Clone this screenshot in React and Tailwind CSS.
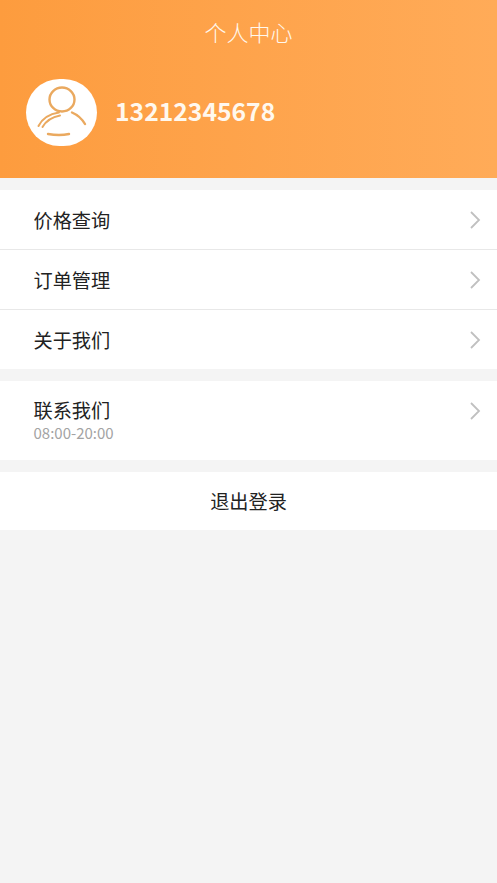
const cjk = { fontFamily: '"Noto Sans CJK SC", "Noto Sans", sans-serif' };

function Chevron() {
  return (
    <svg width="12" height="20" viewBox="0 0 12 20" fill="none" className="shrink-0">
      <path d="M2 2 L10 10 L2 18" stroke="#c0c0c0" strokeWidth="1.8" />
    </svg>
  );
}

function Avatar() {
  return (
    <div className="w-[71px] h-[67px] rounded-full bg-white flex items-center justify-center shrink-0">
      <svg width="71" height="67" viewBox="0 0 71 67" fill="none" stroke="#eaa95f" strokeLinecap="round">
        <ellipse cx="36" cy="20.5" rx="12.5" ry="12" strokeWidth="2.4" />
        <path d="M46 33.5 C52 36 56 40 59 45" strokeWidth="2.4" />
        <path d="M12.5 47 C16 40 23 35 33 33.5" strokeWidth="2" />
        <path d="M16.5 48 C20 42 26 38 34 36.5" strokeWidth="2" />
        <path d="M22 55 C28 56 38 56 43 55" strokeWidth="2.4" />
      </svg>
    </div>
  );
}

function Row({ label, border }) {
  return (
    <div className={"pl-[33.5px] " + (border ? "border-b border-[#e8e8e8]" : "")}>
      <div className="flex items-center justify-between pr-[16px] h-[59px]">
        <div className="text-[19.2px] leading-[28px] font-normal text-[#222222]">{label}</div>
        <Chevron />
      </div>
    </div>
  );
}

function ContactRow({ label, sub }) {
  return (
    <div className="pl-[33.5px] pr-[16px] pt-[17px] h-[79px] flex justify-between items-start">
      <div className="flex flex-col">
        <div className="text-[19.2px] leading-[24px] font-normal text-[#222222]">{label}</div>
        <div className="whitespace-nowrap text-[15px] leading-[22px] font-normal text-[#a3a3a3]">{sub}</div>
      </div>
      <div className="pt-[3px]"><Chevron /></div>
    </div>
  );
}

export default function App() {
  return (
    <div className="w-[497px] h-[883px] bg-[#f4f4f4] overflow-hidden" style={cjk}>
      <header className="h-[178px] bg-gradient-to-r from-[#fd9c3e] to-[#ffab58]">
        <h1 className="pt-[17px] text-center text-[22px] leading-[28px] font-light text-[#fff8ee]">个人中心</h1>
        <div className="flex items-center gap-[18px] pl-[26px] mt-[34px]">
          <Avatar />
          <span className="text-[24.7px] leading-[36px] font-semibold text-[#fff8ee] relative top-[-3px]">13212345678</span>
        </div>
      </header>
      <section className="mt-[12px] bg-white">
        <Row label="价格查询" border />
        <Row label="订单管理" border />
        <Row label="关于我们" />
      </section>
      <section className="mt-[12px] bg-white">
        <ContactRow label="联系我们" sub="08:00-20:00" />
      </section>
      <section className="mt-[12px] h-[58px] bg-white flex items-center justify-center text-[19.2px] font-normal text-[#222222]">
        退出登录
      </section>
    </div>
  );
}
